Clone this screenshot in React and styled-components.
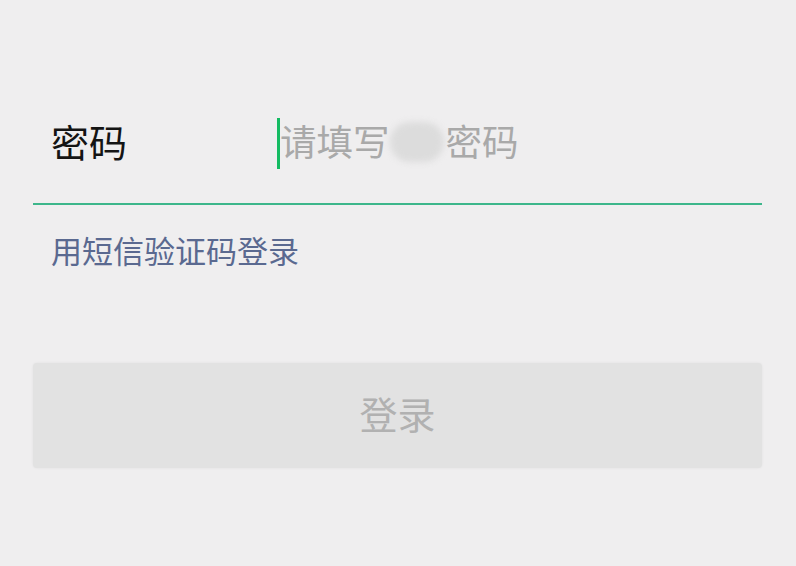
import React from 'react';
import styled, { createGlobalStyle } from "styled-components"

const Global = createGlobalStyle`
    html, body {
        margin: 0;
        padding: 0;
        background: #efeeef;
    }
    body {
        font-family: "Noto Sans CJK SC", "Noto Sans", sans-serif;
    }
`

const Page = styled.div`
    width: 796px;
    height: 566px;
    box-sizing: border-box;
    padding: 83px 34px 0 33px;
    background: #efeeef;
    overflow: hidden;
`

const FieldRow = styled.div`
    display: flex;
    align-items: center;
    height: 120px;
    border-bottom: 2px solid #3db68b;
`

const Label = styled.div`
    width: 244px;
    padding-left: 18px;
    box-sizing: border-box;
    font-size: 38px;
    color: #141414;
    line-height: 1;
    margin-top: -4px;
`

const InputBox = styled.div`
    display: flex;
    align-items: center;
    flex: 1;
`

const Caret = styled.span`
    display: block;
    width: 3px;
    height: 51px;
    background: #14bb62;
`

const Placeholder = styled.span`
    display: flex;
    align-items: center;
    font-size: 36.5px;
    color: #a9a9a9;
    line-height: 1;
    margin-top: -3px;
`

const Masked = styled.span`
    display: inline-block;
    width: 54px;
    height: 40px;
    margin-right: 2px;
    border-radius: 20px;
    background: #dcdcdc;
    filter: blur(3px);
`

const SmsLink = styled.a`
    display: block;
    margin-top: 24px;
    padding-left: 18px;
    font-size: 31px;
    line-height: 42px;
    color: #5a6990;
    text-decoration: none;
    cursor: pointer;
`

const LoginButton = styled.button`
    display: block;
    width: 100%;
    height: 105px;
    margin-top: 92px;
    padding: 0 0 6px;
    border: none;
    border-radius: 4px;
    background: #e2e2e2;
    box-shadow: 0 0 3px rgba(0, 0, 0, 0.06);
    font-family: inherit;
    font-size: 38px;
    color: #b1b1b1;
    cursor: not-allowed;
`

const App = () => {
    return (
        <>
            <Global />
            <Page>
                <FieldRow>
                    <Label>密码</Label>
                    <InputBox>
                        <Caret />
                        <Placeholder>
                            请填写<Masked />密码
                        </Placeholder>
                    </InputBox>
                </FieldRow>

                <SmsLink>用短信验证码登录</SmsLink>

                <LoginButton disabled>登录</LoginButton>
            </Page>
        </>
    )
}

export default App
